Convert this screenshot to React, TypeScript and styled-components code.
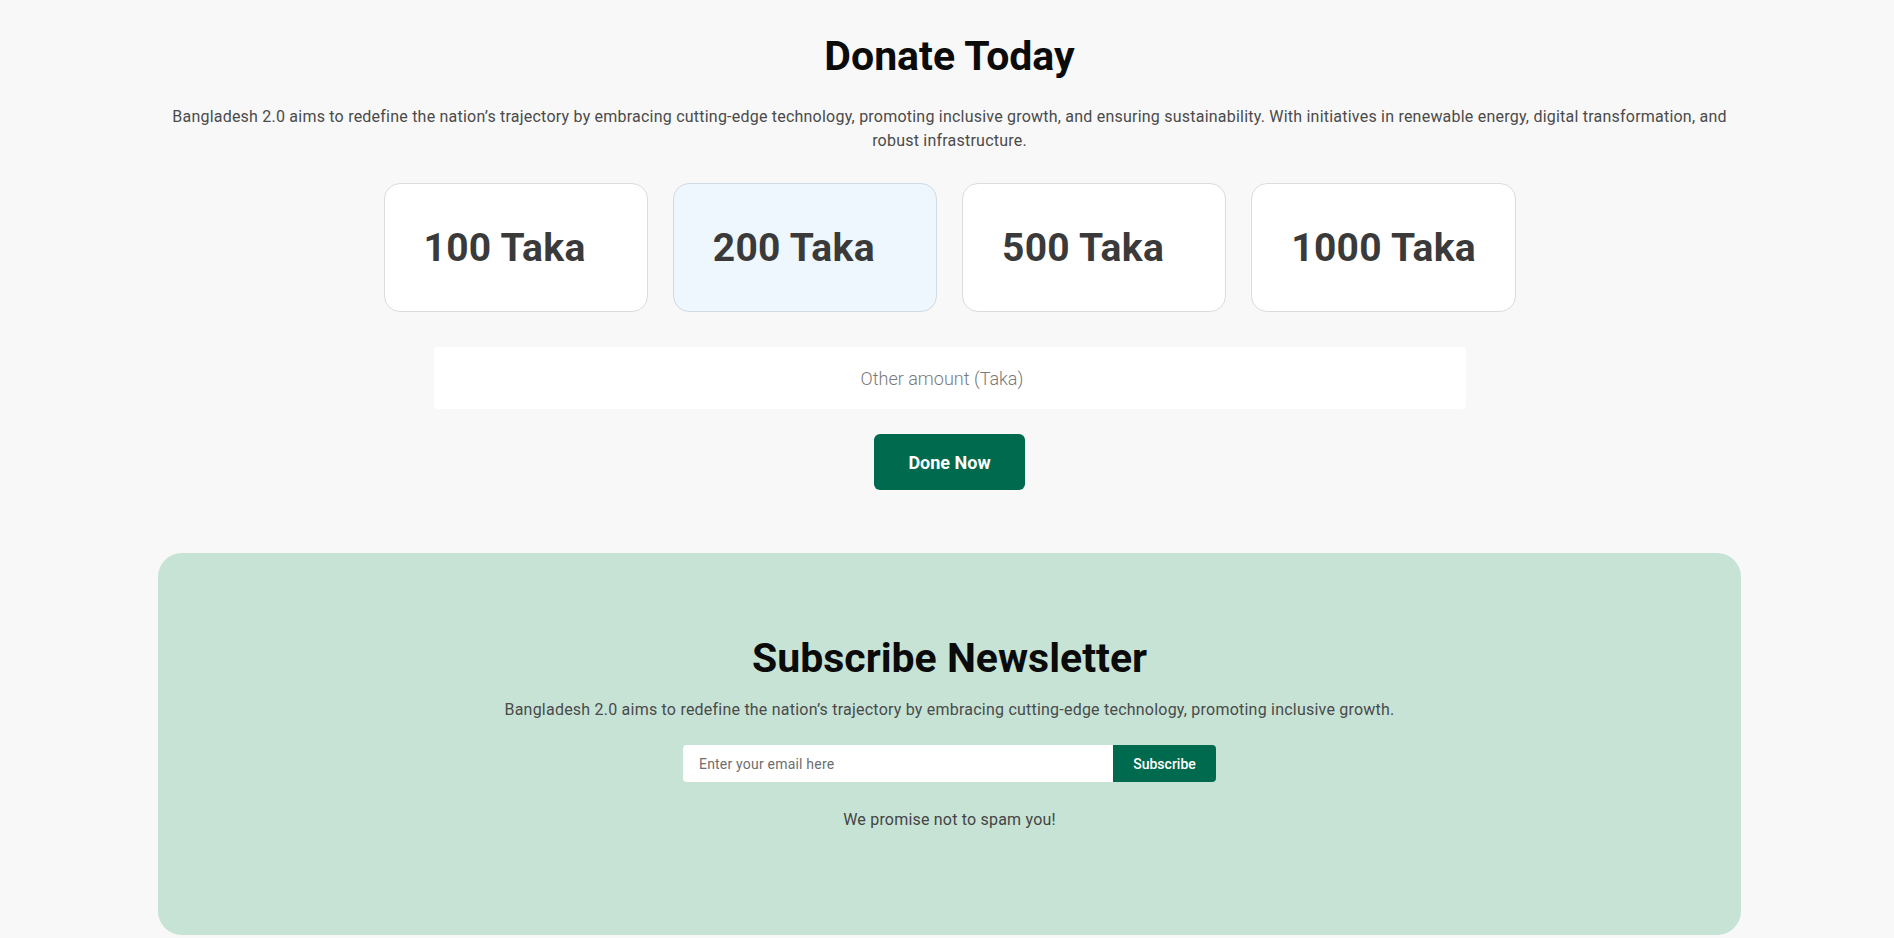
import React from "react";
import styled, { createGlobalStyle } from "styled-components";

const GlobalStyle = createGlobalStyle`
  * { box-sizing: border-box; }
  html, body { margin: 0; padding: 0; }
  body {
    background: #f8f8f8;
    font-family: Roboto, "Noto Sans", Arial, sans-serif;
    color: #222;
  }
`;

const GREEN = "#006a4e";

const Page = styled.main`
  display: flex;
  flex-direction: column;
  align-items: center;
  padding: 0 0 1px 5px;
`;

const DonateSection = styled.section`
  width: 1583px;
  display: flex;
  flex-direction: column;
  align-items: center;
  padding-top: 32px;
`;

const Title = styled.h2`
  margin: 0;
  font-size: 41px;
  line-height: 49px;
  font-weight: 700;
  color: #0b0b0b;
  text-align: center;
`;

const Lead = styled.p<{ $gap: number }>`
  margin: ${(p) => p.$gap}px 0 0;
  font-size: 16px;
  line-height: 24px;
  letter-spacing: 0.22px;
  color: #4a4a4a;
  text-align: center;
`;

const AmountGrid = styled.div`
  margin-top: 30px;
  width: 1132px;
  display: grid;
  grid-template-columns: repeat(4, 1fr);
  gap: 25px;
`;

const AmountCard = styled.button<{ $active?: boolean }>`
  display: flex;
  align-items: center;
  justify-content: flex-start;
  height: 129px;
  padding: 0 20px 0 39px;
  border: 1px solid ${(p) => (p.$active ? "#d0dae4" : "#dcdcdc")};
  border-radius: 16px;
  background: ${(p) => (p.$active ? "#eef6fe" : "#ffffff")};
  font-family: inherit;
  font-size: 39px;
  letter-spacing: 0.3px;
  font-weight: 700;
  white-space: nowrap;
  text-align: left;
  color: #3a3a3a;
  cursor: pointer;
`;

const OtherAmount = styled.input`
  margin-top: 35px;
  width: 1032px;
  height: 62px;
  border: none;
  border-radius: 4px;
  background: #fff;
  font-family: inherit;
  font-size: 18px;
  font-weight: 300;
  text-align: center;
  color: #333;
  outline: none;
  &::placeholder { color: #7a7a7a; }
`;

const DonateButton = styled.button`
  margin-top: 25px;
  width: 151px;
  height: 56px;
  border: none;
  border-radius: 6px;
  background: ${GREEN};
  color: #fff;
  font-family: inherit;
  font-size: 18px;
  font-weight: 700;
  cursor: pointer;
`;

const NewsletterCard = styled.section`
  margin-top: 63px;
  width: 1583px;
  border-radius: 24px;
  background: #c6e3d6;
  display: flex;
  flex-direction: column;
  align-items: center;
  padding: 81px 0 103px;
`;

const SubscribeForm = styled.form`
  margin-top: 23px;
  display: flex;
  width: 533px;
  height: 37px;
`;

const EmailInput = styled.input`
  flex: 1;
  min-width: 0;
  border: none;
  border-radius: 4px 0 0 4px;
  background: #fff;
  padding: 0 16px;
  font-family: inherit;
  font-size: 14px;
  letter-spacing: 0.2px;
  color: #333;
  outline: none;
  &::placeholder { color: #6e6e6e; }
`;

const SubscribeButton = styled.button`
  width: 103px;
  border: none;
  border-radius: 0 4px 4px 0;
  background: ${GREEN};
  color: #fff;
  font-family: inherit;
  font-size: 14px;
  font-weight: 500;
  cursor: pointer;
`;

const Note = styled.p`
  margin: 26px 0 0;
  font-size: 16px;
  line-height: 24px;
  letter-spacing: 0.2px;
  color: #444;
`;

const amounts = [
  { label: "100 Taka" },
  { label: "200 Taka", active: true },
  { label: "500 Taka" },
  { label: "1000 Taka" },
];

export default function App() {
  return (
    <>
      <GlobalStyle />
      <Page>
        <DonateSection>
          <Title>Donate Today</Title>
          <Lead $gap={24}>
            Bangladesh 2.0 aims to redefine the nation’s trajectory by embracing cutting-edge technology,
            promoting inclusive growth, and ensuring sustainability. With initiatives in renewable energy,
            digital transformation, and robust infrastructure.
          </Lead>
          <AmountGrid>
            {amounts.map((a) => (
              <AmountCard key={a.label} $active={a.active} type="button">
                {a.label}
              </AmountCard>
            ))}
          </AmountGrid>
          <OtherAmount type="number" placeholder="Other amount (Taka)" />
          <DonateButton type="button">Done Now</DonateButton>
        </DonateSection>
        <NewsletterCard>
          <Title>Subscribe Newsletter</Title>
          <Lead $gap={15}>
            Bangladesh 2.0 aims to redefine the nation’s trajectory by embracing cutting-edge technology,
            promoting inclusive growth.
          </Lead>
          <SubscribeForm onSubmit={(e) => e.preventDefault()}>
            <EmailInput type="email" placeholder="Enter your email here" />
            <SubscribeButton type="submit">Subscribe</SubscribeButton>
          </SubscribeForm>
          <Note>We promise not to spam you!</Note>
        </NewsletterCard>
      </Page>
    </>
  );
}
